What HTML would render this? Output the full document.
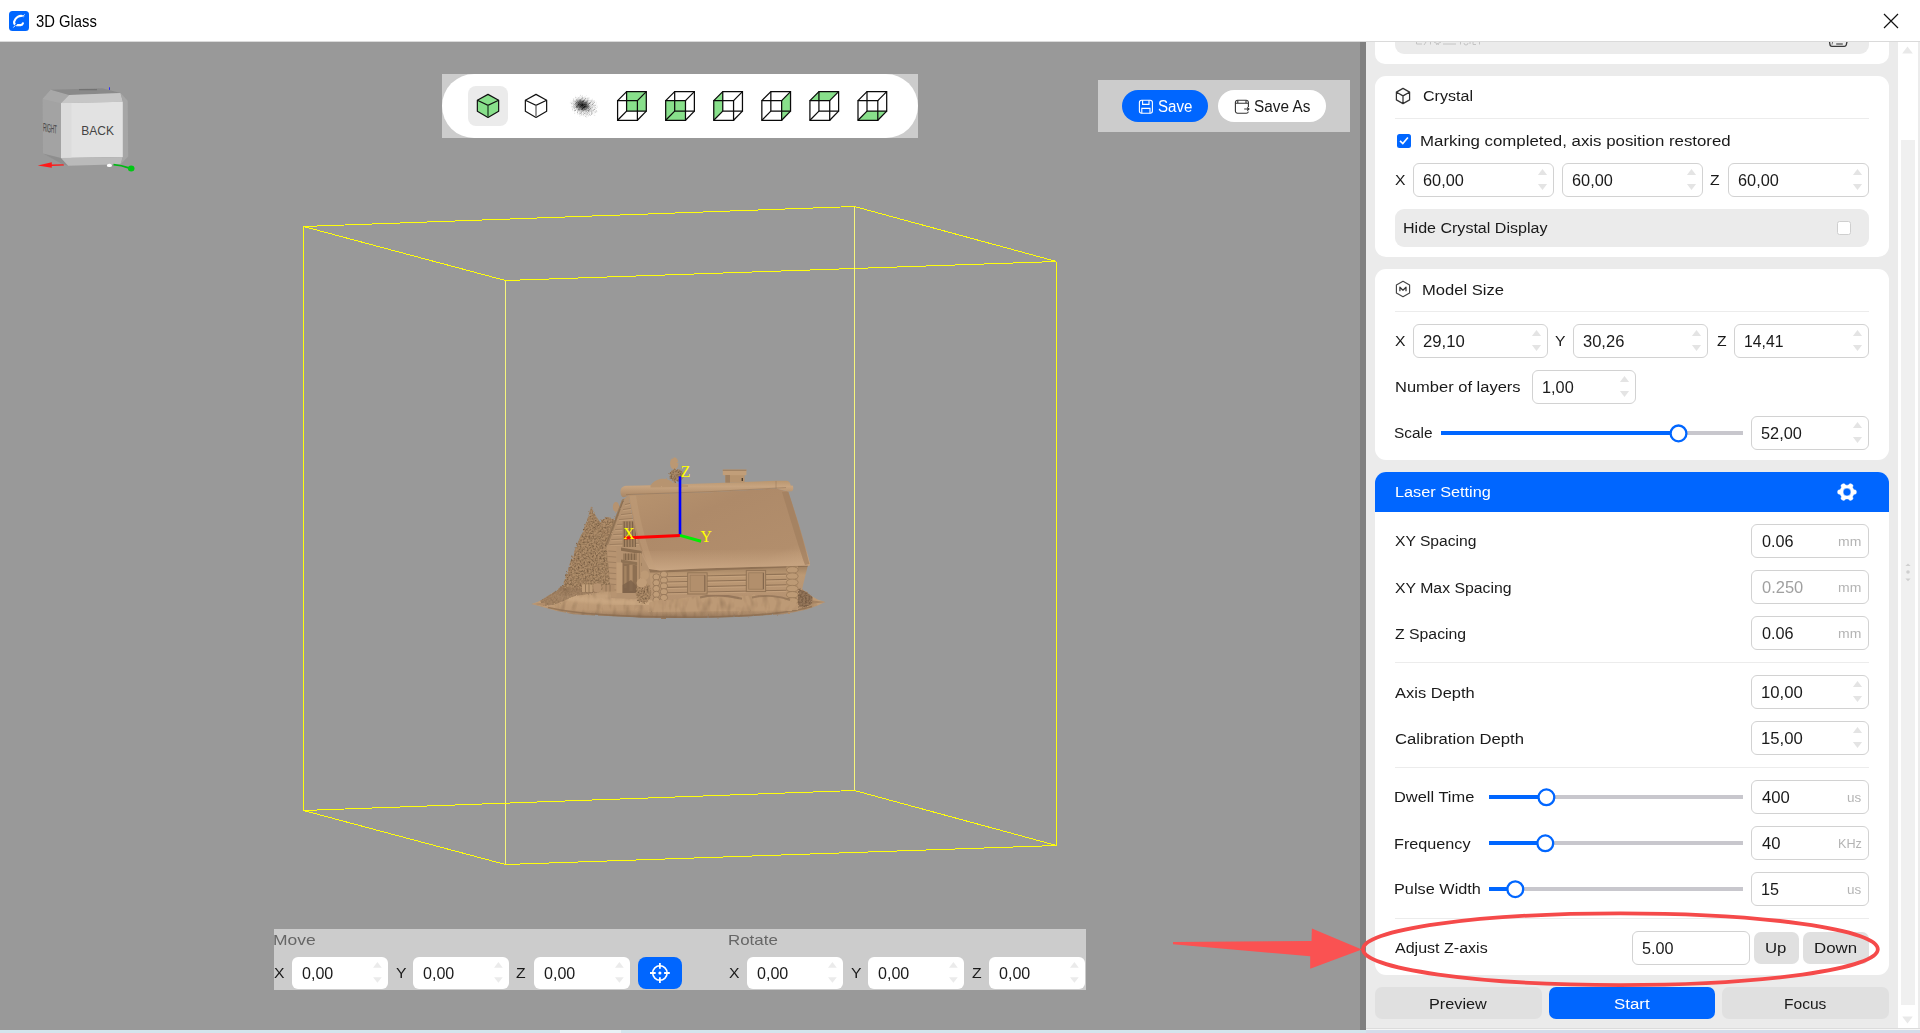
<!DOCTYPE html>
<html><head><meta charset="utf-8"><title>3D Glass</title>
<style>
html,body{margin:0;padding:0;}
body{width:1920px;height:1033px;overflow:hidden;position:relative;background:#999;font-family:"Liberation Sans",sans-serif;}
div{position:absolute;}
.abs{position:absolute;}
.t{white-space:nowrap;line-height:20px;height:20px;transform-origin:0 0;}
svg{overflow:visible;pointer-events:none;}
</style></head><body>

<div style="left:0px;top:42px;width:1360px;height:988px;background:#999;"></div>
<svg class="abs" style="left:0;top:0" width="1360" height="1033" viewBox="0 0 1360 1033">
<defs>
<linearGradient id="gBase" x1="0" y1="0" x2="0" y2="1"><stop offset="0" stop-color="#9a7b5b"/><stop offset="0.45" stop-color="#c4a17c"/><stop offset="0.8" stop-color="#bb9874"/><stop offset="1" stop-color="#94755a"/></linearGradient>
<linearGradient id="gRoof" x1="0" y1="0" x2="1" y2="1"><stop offset="0" stop-color="#b8946f"/><stop offset="0.35" stop-color="#ae8a69"/><stop offset="0.8" stop-color="#b28e6c"/><stop offset="1" stop-color="#c4a07c"/></linearGradient>
<linearGradient id="gEave" x1="0" y1="0" x2="0" y2="1"><stop offset="0" stop-color="#c9a683" stop-opacity="0"/><stop offset="1" stop-color="#caa784" stop-opacity="0.95"/></linearGradient>
<linearGradient id="gRidge" x1="0" y1="0" x2="0" y2="1"><stop offset="0" stop-color="#b9966f"/><stop offset="0.35" stop-color="#c7a480"/><stop offset="1" stop-color="#a98664"/></linearGradient>
<linearGradient id="gWall" x1="0" y1="0" x2="0" y2="1"><stop offset="0" stop-color="#9d7e5e"/><stop offset="0.25" stop-color="#bc9974"/><stop offset="1" stop-color="#b39070"/></linearGradient>
<filter id="fTree" x="-5%" y="-5%" width="110%" height="110%"><feTurbulence type="fractalNoise" baseFrequency="0.55" numOctaves="2" seed="4" result="n"/><feColorMatrix in="n" type="matrix" values="0 0 0 0 0  0 0 0 0 0  0 0 0 0 0  1.6 0 0 0 -0.55" result="a"/><feFlood flood-color="#5e4630"/><feComposite in2="a" operator="in" result="dk"/><feDisplacementMap in="SourceGraphic" in2="n" scale="3" xChannelSelector="R" yChannelSelector="G" result="sg"/><feComposite in="dk" in2="sg" operator="in" result="dk2"/><feMerge><feMergeNode in="sg"/><feMergeNode in="dk2"/></feMerge></filter>
<filter id="fRough" x="-5%" y="-5%" width="110%" height="110%"><feTurbulence type="fractalNoise" baseFrequency="0.35" numOctaves="2" seed="9" result="n"/><feDisplacementMap in="SourceGraphic" in2="n" scale="2.2" xChannelSelector="R" yChannelSelector="G"/></filter>
<filter id="fBase" x="-5%" y="-10%" width="110%" height="120%"><feTurbulence type="fractalNoise" baseFrequency="0.16 0.07" numOctaves="2" seed="2" result="n"/><feColorMatrix in="n" type="matrix" values="0 0 0 0 0  0 0 0 0 0  0 0 0 0 0  0.9 0 0 0 -0.42" result="a"/><feFlood flood-color="#6b5138"/><feComposite in2="a" operator="in" result="dk"/><feDisplacementMap in="SourceGraphic" in2="n" scale="2.5" xChannelSelector="R" yChannelSelector="G" result="sg"/><feComposite in="dk" in2="sg" operator="in" result="dk2"/><feMerge><feMergeNode in="sg"/><feMergeNode in="dk2"/></feMerge></filter>
<filter id="b1"><feGaussianBlur stdDeviation="0.6"/></filter>
<filter id="b2"><feGaussianBlur stdDeviation="1.2"/></filter>
</defs>
<g shape-rendering="crispEdges">
<line x1="303.5" y1="226.5" x2="854.5" y2="206.5" stroke="#ffff0a" stroke-width="1"/>
<line x1="303.5" y1="226.5" x2="505.5" y2="280.5" stroke="#ffff0a" stroke-width="1"/>
<line x1="505.5" y1="280.5" x2="1056.5" y2="261.5" stroke="#ffff0a" stroke-width="1"/>
<line x1="854.5" y1="206.5" x2="1056.5" y2="261.5" stroke="#ffff0a" stroke-width="1"/>
<line x1="303.5" y1="226.5" x2="303.5" y2="810.5" stroke="#ffff0a" stroke-width="1"/>
<line x1="505.5" y1="280.5" x2="505.5" y2="864.5" stroke="#f6f57c" stroke-width="1"/>
<line x1="854.5" y1="206.5" x2="854.5" y2="790.5" stroke="#f6f57c" stroke-width="1"/>
<line x1="1056.5" y1="261.5" x2="1056.5" y2="845.5" stroke="#ffff0a" stroke-width="1"/>
<line x1="303.5" y1="810.5" x2="854.5" y2="790.5" stroke="#ffff0a" stroke-width="1"/>
<line x1="303.5" y1="810.5" x2="505.5" y2="864.5" stroke="#ffff0a" stroke-width="1"/>
<line x1="505.5" y1="864.5" x2="1056.5" y2="845.5" stroke="#ffff0a" stroke-width="1"/>
<line x1="854.5" y1="790.5" x2="1056.5" y2="845.5" stroke="#ffff0a" stroke-width="1"/>
</g>
<g>
<polygon points="42.6,98.9 50.8,89.7 69.2,95 61,103.2 61,157.9 67.9,165.7 62,163.5 43,153.5" fill="#a3a3a3"/>
<polygon points="43,153.5 61,157.9 67.9,165.7 62,164" fill="#8e8e8e"/>
<polygon points="42.6,98.9 50.8,89.7 69.2,95 61,103.2" fill="#a8a8a8"/>
<polygon points="50.8,89.7 102.1,88.2 120.5,93.1 69.2,95" fill="#8a8a8a"/>
<polygon points="61,103.2 69.2,95 120.5,93.1 122.9,101.8" fill="#c6c6c6"/>
<polygon points="61,103.2 122.9,101.8 122.9,156.9 61,157.9" fill="#e2e2e2"/>
<polygon points="61,103.2 71.5,103 71.5,157.7 61,157.9" fill="#dcdcdc"/>
<polygon points="61,157.9 122.9,156.9 120.5,164.2 68.2,165.7" fill="#bababa"/>
<polygon points="122.9,101.8 120.5,93.1 127.7,100.8 128.2,156.5 120.5,164.2 122.9,156.9" fill="#a6a6a6"/>
<text x="97.7" y="134.6" font-family="Liberation Sans, sans-serif" font-size="12" fill="#444" text-anchor="middle">BACK</text>
<text transform="translate(43,131.2) skewY(10) scale(0.40,1)" font-family="Liberation Sans, sans-serif" font-size="12" fill="#444" letter-spacing="-0.6">RIGHT</text>
<rect x="109" y="87.3" width="1" height="2.6" fill="#2a2aff"/>
<rect x="79" y="89.2" width="18" height="1" fill="#555" opacity="0.55"/>
<polygon points="37.7,165.4 51.8,162.2 51.8,164.4 63.5,164.3 64,165.6 51.8,166 51.8,167.7" fill="#ff1a1a"/>
<path d="M113.5 164.6 C120 165 125 166.5 129.5 168.2" stroke="#00b814" stroke-width="1.8" fill="none"/>
<ellipse cx="131.2" cy="168.4" rx="3.3" ry="3" fill="#00c814"/>
<ellipse cx="109.4" cy="165.4" rx="2.6" ry="1.6" fill="#fff"/>
</g>
<g>
<polygon points="531.5,604 538,601.8 544,598.5 554,592 566,583 600,578 700,580 798,586 806,592 812.6,596.8 818,599.8 825.2,602.1 817,605.8 806.8,609.4 795,612 782.6,614.2 745,616.4 710,617.6 680,617.9 645,617.7 621.8,616.6 595,615.6 573.4,614.2 556,610.8 544.4,607.4" fill="url(#gBase)" filter="url(#fBase)"/>
<path d="M548 607.5 C580 615 640 617.5 700 617.2 C750 616.5 790 613 812 606.5" stroke="#8a6c50" stroke-width="1.6" fill="none" opacity="0.7" filter="url(#b1)"/>
<path d="M556 596 C600 604 700 607 800 600" stroke="#d0ae88" stroke-width="5" fill="none" opacity="0.55" filter="url(#b2)"/>
<polygon points="540,601 554,592 566,583 580,582 600,584 600,592 575,596 556,604 545,606" fill="#8f7155" opacity="0.55" filter="url(#fTree)"/>
<polygon points="531.5,604 545,602.6 545,605.4" fill="#b08c6a"/>
<polygon points="825.5,602 812,600.6 812,603.8" fill="#a58362"/>
<polygon points="591.7,506.5 593.5,512 596.5,517 600,522 604,528 608,536 612,548 616,565 618,590 563,588 564,581 566,575 568.5,568 571,560 573.5,553.5 576,547 578.5,541 581,535 583.5,529.5 586,523 588.5,516 590,510" fill="#ad8c69" filter="url(#fTree)"/>
<polygon points="601,520 606,517 612,518 616,522 615,535 612,548 606,546 602,530" fill="#ad8b68" filter="url(#fTree)"/>
<ellipse cx="607.5" cy="524.5" rx="6.5" ry="6.8" fill="#b08e6b" filter="url(#fTree)"/>
<ellipse cx="616" cy="507" rx="3.2" ry="5" fill="#b6936f" filter="url(#fRough)"/>
<polygon points="624.5,498.5 628.6,495 634,527 641,548 652,572 653,600 611,598 609,570 606.5,545 613,527 619,511" fill="#b49270"/>
<line x1="624.9" y1="504.6" x2="630.8" y2="503.2" stroke="#8c6f53" stroke-width="1.0" opacity="0.55"/>
<line x1="624.9" y1="505.8" x2="630.8" y2="504.4" stroke="#cfac87" stroke-width="1.0" opacity="0.45"/>
<line x1="622.9" y1="509.6" x2="631.9" y2="508.2" stroke="#8c6f53" stroke-width="1.0" opacity="0.55"/>
<line x1="622.9" y1="510.8" x2="631.9" y2="509.4" stroke="#cfac87" stroke-width="1.0" opacity="0.45"/>
<line x1="621.0" y1="514.6" x2="633.0" y2="513.2" stroke="#8c6f53" stroke-width="1.0" opacity="0.55"/>
<line x1="621.0" y1="515.8" x2="633.0" y2="514.4" stroke="#cfac87" stroke-width="1.0" opacity="0.45"/>
<line x1="619.0" y1="519.6" x2="634.1" y2="518.2" stroke="#8c6f53" stroke-width="1.0" opacity="0.55"/>
<line x1="619.0" y1="520.8" x2="634.1" y2="519.4" stroke="#cfac87" stroke-width="1.0" opacity="0.45"/>
<line x1="617.1" y1="524.6" x2="635.2" y2="523.2" stroke="#8c6f53" stroke-width="1.0" opacity="0.55"/>
<line x1="617.1" y1="525.8" x2="635.2" y2="524.4" stroke="#cfac87" stroke-width="1.0" opacity="0.45"/>
<line x1="615.1" y1="529.6" x2="636.3" y2="528.2" stroke="#8c6f53" stroke-width="1.0" opacity="0.55"/>
<line x1="615.1" y1="530.8" x2="636.3" y2="529.4" stroke="#cfac87" stroke-width="1.0" opacity="0.45"/>
<line x1="613.2" y1="534.6" x2="637.4" y2="533.2" stroke="#8c6f53" stroke-width="1.0" opacity="0.55"/>
<line x1="613.2" y1="535.8" x2="637.4" y2="534.4" stroke="#cfac87" stroke-width="1.0" opacity="0.45"/>
<line x1="611.2" y1="539.6" x2="638.5" y2="538.2" stroke="#8c6f53" stroke-width="1.0" opacity="0.55"/>
<line x1="611.2" y1="540.8" x2="638.5" y2="539.4" stroke="#cfac87" stroke-width="1.0" opacity="0.45"/>
<line x1="609.3" y1="544.6" x2="639.6" y2="543.2" stroke="#8c6f53" stroke-width="1.0" opacity="0.55"/>
<line x1="609.3" y1="545.8" x2="639.6" y2="544.4" stroke="#cfac87" stroke-width="1.0" opacity="0.45"/>
<polygon points="624.5,498.5 622,499.5 604.8,544.5 607.8,546" fill="#9a7c5d" filter="url(#fRough)"/>
<path d="M623 501 L606 545" stroke="#7d6248" stroke-width="0.8" opacity="0.7"/>
<rect x="622.5" y="521" width="13" height="26" fill="#a68563"/>
<line x1="624.2" y1="521.5" x2="624.4000000000001" y2="547" stroke="#6f5740" stroke-width="1.0" opacity="0.85"/>
<line x1="627.0" y1="521.5" x2="627.2" y2="547" stroke="#6f5740" stroke-width="1.0" opacity="0.85"/>
<line x1="629.8" y1="521.5" x2="630.0" y2="547" stroke="#6f5740" stroke-width="1.0" opacity="0.85"/>
<line x1="632.6" y1="521.5" x2="632.8000000000001" y2="547" stroke="#6f5740" stroke-width="1.0" opacity="0.85"/>
<line x1="635.2" y1="521.5" x2="635.4000000000001" y2="547" stroke="#6f5740" stroke-width="1.0" opacity="0.85"/>
<polygon points="621,547.5 642,551 642,554.2 621,550.8" fill="#8a6d50"/>
<rect x="623" y="553.5" width="14.5" height="6.5" fill="#9c7d5d"/>
<line x1="625.5" y1="553.5" x2="625.5" y2="560" stroke="#7a5f45" stroke-width="0.9" opacity="0.8"/>
<line x1="628.5" y1="553.5" x2="628.5" y2="560" stroke="#7a5f45" stroke-width="0.9" opacity="0.8"/>
<line x1="631.5" y1="553.5" x2="631.5" y2="560" stroke="#7a5f45" stroke-width="0.9" opacity="0.8"/>
<line x1="634.5" y1="553.5" x2="634.5" y2="560" stroke="#7a5f45" stroke-width="0.9" opacity="0.8"/>
<polygon points="621,559.5 642,563 642,566 621,562.8" fill="#8f7254"/>
<polygon points="622.5,563 637.5,565.5 637.5,593 622.5,593" fill="#8d6f52"/>
<rect x="629.4" y="565" width="3.2" height="26" fill="#b08d6a"/>
<rect x="624.2" y="566" width="2.4" height="22" fill="#a58462"/>
<polygon points="622.5,585 631,580 637.5,587 637.5,593 622.5,593" fill="#7e634a" opacity="0.85"/>
<rect x="616" y="562.5" width="6.2" height="30.5" fill="#c09d78"/>
<rect x="637.2" y="553" width="4.2" height="38" fill="#b6936f"/>
<line x1="639.3" y1="553" x2="639.3" y2="590" stroke="#8c6f53" stroke-width="0.8" opacity="0.7"/>
<polygon points="607,545 616.5,547 616.5,597 611.5,597 609,570" fill="#b79471"/>
<line x1="608.2" y1="551" x2="616.2" y2="551.6" stroke="#8c6f53" stroke-width="0.9" opacity="0.6"/>
<line x1="608.2" y1="556.5" x2="616.2" y2="557.1" stroke="#8c6f53" stroke-width="0.9" opacity="0.6"/>
<line x1="608.2" y1="562" x2="616.2" y2="562.6" stroke="#8c6f53" stroke-width="0.9" opacity="0.6"/>
<line x1="608.2" y1="567.5" x2="616.2" y2="568.1" stroke="#8c6f53" stroke-width="0.9" opacity="0.6"/>
<line x1="608.2" y1="573" x2="616.2" y2="573.6" stroke="#8c6f53" stroke-width="0.9" opacity="0.6"/>
<line x1="608.2" y1="578.5" x2="616.2" y2="579.1" stroke="#8c6f53" stroke-width="0.9" opacity="0.6"/>
<line x1="608.2" y1="584" x2="616.2" y2="584.6" stroke="#8c6f53" stroke-width="0.9" opacity="0.6"/>
<line x1="608.2" y1="589.5" x2="616.2" y2="590.1" stroke="#8c6f53" stroke-width="0.9" opacity="0.6"/>
<rect x="582" y="584.5" width="10.5" height="7.5" fill="#bf9d78"/><rect x="593.5" y="583.5" width="7.5" height="8.5" rx="2" fill="#b59270"/><rect x="602.5" y="585" width="12" height="6.5" fill="#b08d6b"/>
<path d="M585.5 584.5 V592 M589 584.5 V592 M606 585 V591.5 M610 585 V591.5" stroke="#8b6e52" stroke-width="0.8"/>
<ellipse cx="643.5" cy="593" rx="7.8" ry="10.5" fill="#ae8c69" filter="url(#fTree)"/><ellipse cx="644.8" cy="575.2" rx="4.2" ry="4.8" fill="#bd9a75" filter="url(#fRough)"/><ellipse cx="641.8" cy="583" rx="5.2" ry="4.6" fill="#c09d78" filter="url(#fRough)"/>
<polygon points="649,568.7 808,564.8 798,606 653,603" fill="url(#gWall)"/>
<line x1="667" y1="576.7" x2="787" y2="574.1" stroke="#80644a" stroke-width="1.1" opacity="0.7"/>
<line x1="667" y1="577.9" x2="787" y2="575.3" stroke="#d0ad88" stroke-width="1.0" opacity="0.5"/>
<line x1="667" y1="582.0" x2="787" y2="579.4" stroke="#80644a" stroke-width="1.1" opacity="0.7"/>
<line x1="667" y1="583.1999999999999" x2="787" y2="580.5999999999999" stroke="#d0ad88" stroke-width="1.0" opacity="0.5"/>
<line x1="667" y1="587.4000000000001" x2="787" y2="584.8000000000001" stroke="#80644a" stroke-width="1.1" opacity="0.7"/>
<line x1="667" y1="588.6" x2="787" y2="586.0" stroke="#d0ad88" stroke-width="1.0" opacity="0.5"/>
<line x1="667" y1="592.8000000000001" x2="787" y2="590.2" stroke="#80644a" stroke-width="1.1" opacity="0.7"/>
<line x1="667" y1="594.0" x2="787" y2="591.4" stroke="#d0ad88" stroke-width="1.0" opacity="0.5"/>
<polygon points="649,568.7 808,564.8 807.5,566.8 667,572.2 650,572.6" fill="#8a6c50" opacity="0.8"/>
<rect x="687.7" y="572.8" width="19.399999999999977" height="21.200000000000045" fill="#b79471" stroke="#927456" stroke-width="1"/>
<rect x="690.1" y="575.1999999999999" width="14.599999999999977" height="16.400000000000045" fill="#b28f6c" stroke="#9b7c5d" stroke-width="0.8"/>
<line x1="704.9" y1="575.1999999999999" x2="704.9" y2="591.6" stroke="#7b6047" stroke-width="0.9"/>
<rect x="746.3" y="570.4" width="19.300000000000068" height="21.200000000000045" fill="#b79471" stroke="#927456" stroke-width="1"/>
<rect x="748.6999999999999" y="572.8" width="14.500000000000068" height="16.400000000000045" fill="#b28f6c" stroke="#9b7c5d" stroke-width="0.8"/>
<line x1="763.4" y1="572.8" x2="763.4" y2="589.2" stroke="#7b6047" stroke-width="0.9"/>
<ellipse cx="656.3" cy="577.0" rx="3.400000000000034" ry="3.2" fill="#c09d78" stroke="#8e7053" stroke-width="0.7"/>
<ellipse cx="656.3" cy="582.8" rx="3.400000000000034" ry="3.2" fill="#c09d78" stroke="#8e7053" stroke-width="0.7"/>
<ellipse cx="656.3" cy="588.6" rx="3.400000000000034" ry="3.2" fill="#c09d78" stroke="#8e7053" stroke-width="0.7"/>
<ellipse cx="656.3" cy="594.4" rx="3.400000000000034" ry="3.2" fill="#c09d78" stroke="#8e7053" stroke-width="0.7"/>
<ellipse cx="656.3" cy="600.2" rx="3.400000000000034" ry="3.2" fill="#c09d78" stroke="#8e7053" stroke-width="0.7"/>
<ellipse cx="663.9000000000001" cy="574.4" rx="3.6999999999999886" ry="3.2" fill="#c09d78" stroke="#8e7053" stroke-width="0.7"/>
<ellipse cx="663.9000000000001" cy="580.1999999999999" rx="3.6999999999999886" ry="3.2" fill="#c09d78" stroke="#8e7053" stroke-width="0.7"/>
<ellipse cx="663.9000000000001" cy="586.0" rx="3.6999999999999886" ry="3.2" fill="#c09d78" stroke="#8e7053" stroke-width="0.7"/>
<ellipse cx="663.9000000000001" cy="591.8" rx="3.6999999999999886" ry="3.2" fill="#c09d78" stroke="#8e7053" stroke-width="0.7"/>
<ellipse cx="663.9000000000001" cy="597.6" rx="3.6999999999999886" ry="3.2" fill="#c09d78" stroke="#8e7053" stroke-width="0.7"/>
<rect x="786.5" y="566.5" width="11.5" height="40" fill="#b5926e"/>
<ellipse cx="792.3" cy="570.0" rx="5.9" ry="3.3" fill="#bd9a75" stroke="#8e7053" stroke-width="0.6"/>
<ellipse cx="792.3" cy="576.2" rx="5.9" ry="3.3" fill="#bd9a75" stroke="#8e7053" stroke-width="0.6"/>
<ellipse cx="792.3" cy="582.4" rx="5.9" ry="3.3" fill="#bd9a75" stroke="#8e7053" stroke-width="0.6"/>
<ellipse cx="792.3" cy="588.6" rx="5.9" ry="3.3" fill="#bd9a75" stroke="#8e7053" stroke-width="0.6"/>
<ellipse cx="792.3" cy="594.8" rx="5.9" ry="3.3" fill="#bd9a75" stroke="#8e7053" stroke-width="0.6"/>
<ellipse cx="792.3" cy="601.0" rx="5.9" ry="3.3" fill="#bd9a75" stroke="#8e7053" stroke-width="0.6"/>
<polygon points="798,588 806,592 812.6,597 812,604 806,607 798,606.5" fill="#94765a" filter="url(#fTree)"/>
<path d="M648 603 C660 598 668 601 680 598.5 C700 595 715 596.5 730 597.8 C750 593.5 770 596 786 598.5 L798 604 L798 610 L648 612 Z" fill="#bd9a76" filter="url(#fBase)"/>
<path d="M700 597.5 C712 593.8 728 595.5 742 598.8" stroke="#7c6148" stroke-width="2.2" fill="none" opacity="0.55" filter="url(#b1)"/>
<path d="M752 597.5 C765 594.5 780 596.5 790 600" stroke="#7c6148" stroke-width="2" fill="none" opacity="0.5" filter="url(#b1)"/>
<path d="M628.6 494.9 L640 494.2 L710 492.2 L776 488.6 L788.2 491.6 C792 503 796 515 799.8 527.4 C803.5 540 807 552 809.8 562.9 L809.6 565.4 L760 566.8 L700 568.6 L660 570.4 L649.2 569 C645 560 639 545 637 538 C635 531 631.5 512 628.6 494.9 Z" fill="url(#gRoof)"/>
<path d="M640 551 L806.5 548.5 L809.8 562.9 L809.6 565.4 L760 566.8 L700 568.6 L660 570.4 L649.2 569 Z" fill="url(#gEave)"/>
<path d="M629.5 496 C634 520 640 548 650 568 L656 569.5 C646 545 640 520 636 495.5 Z" fill="#c3a07b" opacity="0.45" filter="url(#b1)"/>
<path d="M782 492 C789 515 798 545 805 565 L809.5 564 C803 540 795 512 788.2 491.6 Z" fill="#a17f5f" opacity="0.7" filter="url(#b1)"/>
<path d="M622 487.6 C620 489 619.8 494.5 622.2 496.8 C624 498 627 496 629 494.9 L640 494.2 L710 492.2 L776 488.4 L788.2 491.6 L792 491.2 C793.6 490 793.6 486.6 792.6 485.6 L790.6 485.4 C790.6 483 789 480.8 786.8 480.7 L776 480.8 L710 483.2 L640 485.4 L626 485.8 C624 486 622.8 486.8 622 487.6 Z" fill="url(#gRidge)"/>
<path d="M776 481 L776 488.4" stroke="#9a7a5b" stroke-width="0.8" opacity="0.7"/>
<path d="M626 494.6 L710 491.6 L786 487.6" stroke="#8f7154" stroke-width="0.9" opacity="0.55" fill="none"/>
<rect x="725.4" y="474.6" width="19.2" height="8" fill="#b7946f"/><rect x="722.8" y="469.6" width="23.6" height="5.6" fill="#c19e79"/><rect x="725.4" y="475" width="4.6" height="7.6" fill="#9f8061"/><rect x="722.8" y="469.6" width="23.6" height="1.4" fill="#a28363"/><rect x="741.6" y="478" width="1.4" height="3" fill="#4a3a2a"/>
<path d="M650.5 485.4 C654 480.5 659 478.4 664 478.8 C668 479.2 671 481 674 482.4 C678 484 683 484.2 687 485 L687 487 L650.5 487.4 Z" fill="#b7946f" filter="url(#fRough)"/>
<ellipse cx="674.2" cy="463.4" rx="4.1" ry="6.2" fill="#bb9873" filter="url(#fRough)"/>
<ellipse cx="676.5" cy="475.4" rx="7.2" ry="6.4" fill="#a98866" filter="url(#fTree)"/>
</g>
<g>
<line x1="680" y1="535.5" x2="680" y2="476.4" stroke="#0000ff" stroke-width="2.6"/>
<line x1="624.2" y1="537.9" x2="680" y2="535.4" stroke="#ff0000" stroke-width="3.0"/>
<line x1="680" y1="535.4" x2="701" y2="541.2" stroke="#00ee00" stroke-width="3.0"/>
<g font-family="Liberation Serif, serif" font-size="15.8" fill="#ffff00"><text x="680.8" y="477.0">Z</text><text x="623.2" y="539.2">X</text><text x="700.4" y="542.0">Y</text></g>
</g>
</svg>
<div style="left:0px;top:0px;width:1920px;height:41px;background:#fff;"></div>
<div style="left:0px;top:41px;width:1920px;height:1px;background:#dadada;"></div>
<div style="left:9px;top:11px;width:20px;height:20px;background:#0066ff;border-radius:3.5px;"></div>
<svg class="abs" style="left:9px;top:11px" width="20" height="20" viewBox="0 0 20 20"><path d="M14.2 5.2 C10.5 3.8 6.2 6.5 5.2 10.6 C4.8 12.4 5.6 13.9 7.6 14.1 L11.6 14.1 C12.9 14.1 13.6 13.4 13.9 12.3" fill="none" stroke="#fff" stroke-width="2.2" stroke-linecap="round"/><path d="M15.6 3.6 L4.6 16.2" stroke="#0066ff" stroke-width="1.4"/><path d="M15.6 3.4 L13.4 6" stroke="#fff" stroke-width="0.9"/><path d="M6.3 14.4 L4.4 16.5" stroke="#fff" stroke-width="0.9"/></svg>
<div class="t" style="left:35.96px;top:12.48px;font-size:15.7px;color:#000;transform:scaleX(0.9429);">3D Glass</div>
<svg class="abs" style="left:0;top:0" width="1920" height="41"><path d="M1884 14 L1898 28 M1898 14 L1884 28" stroke="#111" stroke-width="1.2" fill="none"/></svg>
<div style="left:442px;top:74px;width:476px;height:64px;background:#ccc;"></div>
<div style="left:442px;top:74px;width:476px;height:64px;background:#fff;border-radius:32px;"></div>
<div style="left:468px;top:86px;width:40px;height:40px;background:#ebebeb;border-radius:8px;"></div>
<svg class="abs" style="left:0;top:0" width="1920" height="200">
<defs>
<radialGradient id="pcg" cx="0.45" cy="0.42" r="0.55"><stop offset="0" stop-color="#000" stop-opacity="0.95"/><stop offset="0.25" stop-color="#000" stop-opacity="0.75"/><stop offset="0.6" stop-color="#000" stop-opacity="0.35"/><stop offset="1" stop-color="#000" stop-opacity="0"/></radialGradient>
<pattern id="pcd" width="2.2" height="2.2" patternUnits="userSpaceOnUse" patternTransform="rotate(24)"><rect width="2.2" height="2.2" fill="#fff"/><circle cx="1.1" cy="1.1" r="0.95" fill="#000"/></pattern>
<mask id="pcm"><ellipse cx="583.6" cy="106" rx="15.5" ry="11" fill="url(#pcg)" transform="rotate(14 583.6 106)"/></mask>
<filter id="pcb" x="-50%" y="-50%" width="200%" height="200%"><feGaussianBlur stdDeviation="1.8"/></filter>
</defs>
<polygon points="488.00,94.40 498.65,100.20 498.65,111.25 488.00,117.40 477.35,111.25 477.35,100.20" fill="#88e08b" stroke="#111" stroke-width="1.2" stroke-linejoin="round"/>
<path d="M477.35 100.2 L488 105.4 L498.65 100.2" fill="none" stroke="#111" stroke-width="1.2"/>
<path d="M488 105.4 V117.2" fill="none" stroke="#2f5a33" stroke-width="1.5"/>
<polygon points="536.00,94.40 546.65,100.20 546.65,111.25 536.00,117.40 525.35,111.25 525.35,100.20" fill="#fff" stroke="#111" stroke-width="1.2" stroke-linejoin="round"/>
<path d="M525.35 100.2 L536 105.4 L546.65 100.2" fill="none" stroke="#111" stroke-width="1.2"/>
<path d="M536 105.4 V117.2" fill="none" stroke="#777" stroke-width="1.5"/>
<g transform="rotate(18 583.4 106)">
<ellipse cx="581.6" cy="105.4" rx="6.2" ry="4.0" fill="#000" opacity="0.62" filter="url(#pcb)"/>
<circle cx="569.85" cy="104.82" r="0.44" fill="#000" opacity="0.07"/>
<circle cx="569.86" cy="107.22" r="0.44" fill="#000" opacity="0.09"/>
<circle cx="571.43" cy="102.07" r="0.45" fill="#000" opacity="0.14"/>
<circle cx="571.22" cy="104.77" r="0.47" fill="#000" opacity="0.15"/>
<circle cx="570.42" cy="106.19" r="0.45" fill="#000" opacity="0.24"/>
<circle cx="571.44" cy="107.40" r="0.47" fill="#000" opacity="0.39"/>
<circle cx="572.75" cy="99.13" r="0.43" fill="#000" opacity="0.09"/>
<circle cx="572.92" cy="101.93" r="0.48" fill="#000" opacity="0.08"/>
<circle cx="572.16" cy="103.36" r="0.48" fill="#000" opacity="0.37"/>
<circle cx="572.99" cy="104.63" r="0.50" fill="#000" opacity="0.33"/>
<circle cx="572.35" cy="106.20" r="0.49" fill="#000" opacity="0.21"/>
<circle cx="573.01" cy="107.28" r="0.50" fill="#000" opacity="0.46"/>
<circle cx="572.07" cy="108.53" r="0.48" fill="#000" opacity="0.15"/>
<circle cx="572.89" cy="110.19" r="0.48" fill="#000" opacity="0.35"/>
<circle cx="572.33" cy="111.54" r="0.44" fill="#000" opacity="0.08"/>
<circle cx="574.64" cy="99.24" r="0.46" fill="#000" opacity="0.08"/>
<circle cx="573.66" cy="100.43" r="0.47" fill="#000" opacity="0.40"/>
<circle cx="574.59" cy="101.86" r="0.51" fill="#000" opacity="0.39"/>
<circle cx="573.63" cy="103.49" r="0.51" fill="#000" opacity="0.20"/>
<circle cx="574.33" cy="104.55" r="0.53" fill="#000" opacity="0.53"/>
<circle cx="573.52" cy="106.12" r="0.52" fill="#000" opacity="0.25"/>
<circle cx="574.50" cy="107.33" r="0.53" fill="#000" opacity="0.32"/>
<circle cx="573.79" cy="108.55" r="0.51" fill="#000" opacity="0.24"/>
<circle cx="574.33" cy="110.02" r="0.51" fill="#000" opacity="0.40"/>
<circle cx="573.61" cy="111.59" r="0.47" fill="#000" opacity="0.13"/>
<circle cx="574.40" cy="112.90" r="0.46" fill="#000" opacity="0.29"/>
<circle cx="576.17" cy="99.31" r="0.48" fill="#000" opacity="0.23"/>
<circle cx="575.45" cy="100.49" r="0.50" fill="#000" opacity="0.17"/>
<circle cx="576.14" cy="101.88" r="0.53" fill="#000" opacity="0.35"/>
<circle cx="575.08" cy="103.14" r="0.54" fill="#000" opacity="0.38"/>
<circle cx="575.93" cy="104.69" r="0.57" fill="#000" opacity="0.56"/>
<circle cx="575.23" cy="106.18" r="0.55" fill="#000" opacity="0.45"/>
<circle cx="576.06" cy="107.50" r="0.57" fill="#000" opacity="0.53"/>
<circle cx="575.11" cy="108.86" r="0.54" fill="#000" opacity="0.34"/>
<circle cx="575.93" cy="109.93" r="0.53" fill="#000" opacity="0.55"/>
<circle cx="575.43" cy="111.28" r="0.50" fill="#000" opacity="0.40"/>
<circle cx="576.18" cy="112.79" r="0.48" fill="#000" opacity="0.43"/>
<circle cx="575.09" cy="113.92" r="0.44" fill="#000" opacity="0.08"/>
<circle cx="577.48" cy="96.63" r="0.43" fill="#000" opacity="0.24"/>
<circle cx="576.93" cy="97.94" r="0.46" fill="#000" opacity="0.10"/>
<circle cx="577.45" cy="99.34" r="0.50" fill="#000" opacity="0.25"/>
<circle cx="576.69" cy="100.62" r="0.52" fill="#000" opacity="0.24"/>
<circle cx="577.63" cy="101.86" r="0.56" fill="#000" opacity="0.64"/>
<circle cx="576.68" cy="103.11" r="0.57" fill="#000" opacity="0.69"/>
<circle cx="577.56" cy="104.47" r="0.60" fill="#000" opacity="0.54"/>
<circle cx="576.75" cy="106.03" r="0.59" fill="#000" opacity="0.48"/>
<circle cx="577.52" cy="107.51" r="0.60" fill="#000" opacity="0.49"/>
<circle cx="576.86" cy="108.78" r="0.57" fill="#000" opacity="0.71"/>
<circle cx="577.44" cy="109.86" r="0.56" fill="#000" opacity="0.54"/>
<circle cx="576.96" cy="111.48" r="0.52" fill="#000" opacity="0.22"/>
<circle cx="577.39" cy="112.80" r="0.50" fill="#000" opacity="0.49"/>
<circle cx="576.89" cy="114.03" r="0.46" fill="#000" opacity="0.18"/>
<circle cx="577.41" cy="115.47" r="0.43" fill="#000" opacity="0.26"/>
<circle cx="579.29" cy="96.64" r="0.44" fill="#000" opacity="0.21"/>
<circle cx="578.47" cy="98.07" r="0.47" fill="#000" opacity="0.31"/>
<circle cx="579.20" cy="99.41" r="0.51" fill="#000" opacity="0.33"/>
<circle cx="578.32" cy="100.72" r="0.54" fill="#000" opacity="0.59"/>
<circle cx="579.16" cy="102.00" r="0.58" fill="#000" opacity="0.71"/>
<circle cx="578.38" cy="103.34" r="0.60" fill="#000" opacity="0.58"/>
<circle cx="579.19" cy="104.85" r="0.63" fill="#000" opacity="0.56"/>
<circle cx="578.44" cy="105.96" r="0.62" fill="#000" opacity="0.82"/>
<circle cx="579.16" cy="107.33" r="0.63" fill="#000" opacity="0.80"/>
<circle cx="578.18" cy="108.80" r="0.60" fill="#000" opacity="0.74"/>
<circle cx="579.17" cy="110.04" r="0.58" fill="#000" opacity="0.41"/>
<circle cx="578.43" cy="111.40" r="0.54" fill="#000" opacity="0.36"/>
<circle cx="579.30" cy="112.65" r="0.51" fill="#000" opacity="0.42"/>
<circle cx="578.27" cy="114.17" r="0.47" fill="#000" opacity="0.06"/>
<circle cx="579.96" cy="97.88" r="0.49" fill="#000" opacity="0.43"/>
<circle cx="580.61" cy="99.32" r="0.53" fill="#000" opacity="0.55"/>
<circle cx="579.87" cy="100.72" r="0.56" fill="#000" opacity="0.40"/>
<circle cx="580.83" cy="101.90" r="0.60" fill="#000" opacity="0.77"/>
<circle cx="579.83" cy="103.15" r="0.62" fill="#000" opacity="0.72"/>
<circle cx="580.81" cy="104.79" r="0.66" fill="#000" opacity="0.79"/>
<circle cx="580.08" cy="105.91" r="0.65" fill="#000" opacity="0.85"/>
<circle cx="580.66" cy="107.26" r="0.66" fill="#000" opacity="0.67"/>
<circle cx="579.87" cy="108.75" r="0.62" fill="#000" opacity="0.58"/>
<circle cx="580.61" cy="110.19" r="0.60" fill="#000" opacity="0.62"/>
<circle cx="579.88" cy="111.23" r="0.56" fill="#000" opacity="0.68"/>
<circle cx="580.83" cy="112.57" r="0.53" fill="#000" opacity="0.24"/>
<circle cx="579.93" cy="114.02" r="0.49" fill="#000" opacity="0.36"/>
<circle cx="580.49" cy="115.30" r="0.45" fill="#000" opacity="0.27"/>
<circle cx="582.04" cy="96.68" r="0.46" fill="#000" opacity="0.16"/>
<circle cx="581.31" cy="97.72" r="0.49" fill="#000" opacity="0.21"/>
<circle cx="582.21" cy="99.30" r="0.53" fill="#000" opacity="0.48"/>
<circle cx="581.57" cy="100.78" r="0.57" fill="#000" opacity="0.59"/>
<circle cx="582.11" cy="101.94" r="0.61" fill="#000" opacity="0.72"/>
<circle cx="581.25" cy="103.29" r="0.64" fill="#000" opacity="0.62"/>
<circle cx="582.10" cy="104.56" r="0.68" fill="#000" opacity="0.92"/>
<circle cx="581.53" cy="106.01" r="0.69" fill="#000" opacity="0.81"/>
<circle cx="582.33" cy="107.31" r="0.68" fill="#000" opacity="0.89"/>
<circle cx="581.61" cy="108.53" r="0.64" fill="#000" opacity="0.84"/>
<circle cx="582.32" cy="109.90" r="0.61" fill="#000" opacity="0.80"/>
<circle cx="581.50" cy="111.56" r="0.57" fill="#000" opacity="0.52"/>
<circle cx="582.26" cy="112.90" r="0.53" fill="#000" opacity="0.39"/>
<circle cx="581.63" cy="114.09" r="0.49" fill="#000" opacity="0.41"/>
<circle cx="582.11" cy="115.54" r="0.46" fill="#000" opacity="0.23"/>
<circle cx="583.06" cy="95.29" r="0.42" fill="#000" opacity="0.11"/>
<circle cx="583.94" cy="96.74" r="0.46" fill="#000" opacity="0.08"/>
<circle cx="583.01" cy="98.02" r="0.49" fill="#000" opacity="0.49"/>
<circle cx="583.94" cy="99.39" r="0.53" fill="#000" opacity="0.37"/>
<circle cx="582.83" cy="100.58" r="0.57" fill="#000" opacity="0.49"/>
<circle cx="583.89" cy="101.94" r="0.61" fill="#000" opacity="0.67"/>
<circle cx="583.12" cy="103.13" r="0.65" fill="#000" opacity="0.58"/>
<circle cx="583.65" cy="104.58" r="0.68" fill="#000" opacity="0.95"/>
<circle cx="582.86" cy="105.86" r="0.72" fill="#000" opacity="1.00"/>
<circle cx="583.87" cy="107.49" r="0.68" fill="#000" opacity="0.85"/>
<circle cx="583.18" cy="108.70" r="0.65" fill="#000" opacity="0.82"/>
<circle cx="583.61" cy="109.94" r="0.61" fill="#000" opacity="0.81"/>
<circle cx="582.92" cy="111.49" r="0.57" fill="#000" opacity="0.56"/>
<circle cx="583.79" cy="112.89" r="0.53" fill="#000" opacity="0.48"/>
<circle cx="582.92" cy="114.05" r="0.49" fill="#000" opacity="0.33"/>
<circle cx="583.94" cy="115.33" r="0.46" fill="#000" opacity="0.30"/>
<circle cx="583.19" cy="116.81" r="0.42" fill="#000" opacity="0.13"/>
<circle cx="585.21" cy="96.56" r="0.45" fill="#000" opacity="0.19"/>
<circle cx="584.59" cy="97.71" r="0.49" fill="#000" opacity="0.31"/>
<circle cx="585.34" cy="99.21" r="0.53" fill="#000" opacity="0.59"/>
<circle cx="584.58" cy="100.60" r="0.57" fill="#000" opacity="0.65"/>
<circle cx="585.16" cy="101.97" r="0.60" fill="#000" opacity="0.70"/>
<circle cx="584.73" cy="103.47" r="0.64" fill="#000" opacity="0.71"/>
<circle cx="585.32" cy="104.50" r="0.66" fill="#000" opacity="0.72"/>
<circle cx="584.68" cy="106.16" r="0.69" fill="#000" opacity="0.85"/>
<circle cx="585.26" cy="107.23" r="0.66" fill="#000" opacity="0.80"/>
<circle cx="584.72" cy="108.55" r="0.64" fill="#000" opacity="0.78"/>
<circle cx="585.14" cy="109.93" r="0.60" fill="#000" opacity="0.73"/>
<circle cx="584.62" cy="111.33" r="0.57" fill="#000" opacity="0.44"/>
<circle cx="585.38" cy="112.59" r="0.53" fill="#000" opacity="0.37"/>
<circle cx="584.40" cy="114.10" r="0.49" fill="#000" opacity="0.39"/>
<circle cx="585.21" cy="115.46" r="0.45" fill="#000" opacity="0.08"/>
<circle cx="586.83" cy="96.52" r="0.45" fill="#000" opacity="0.12"/>
<circle cx="585.96" cy="97.78" r="0.49" fill="#000" opacity="0.30"/>
<circle cx="586.94" cy="99.26" r="0.52" fill="#000" opacity="0.44"/>
<circle cx="586.14" cy="100.74" r="0.56" fill="#000" opacity="0.64"/>
<circle cx="586.98" cy="102.07" r="0.59" fill="#000" opacity="0.50"/>
<circle cx="586.03" cy="103.23" r="0.63" fill="#000" opacity="0.85"/>
<circle cx="586.77" cy="104.85" r="0.64" fill="#000" opacity="0.89"/>
<circle cx="585.95" cy="105.90" r="0.66" fill="#000" opacity="0.94"/>
<circle cx="586.78" cy="107.19" r="0.64" fill="#000" opacity="0.82"/>
<circle cx="586.07" cy="108.82" r="0.63" fill="#000" opacity="0.82"/>
<circle cx="586.84" cy="110.12" r="0.59" fill="#000" opacity="0.46"/>
<circle cx="585.98" cy="111.47" r="0.56" fill="#000" opacity="0.34"/>
<circle cx="587.07" cy="112.60" r="0.52" fill="#000" opacity="0.54"/>
<circle cx="586.20" cy="114.10" r="0.49" fill="#000" opacity="0.29"/>
<circle cx="586.76" cy="115.28" r="0.45" fill="#000" opacity="0.21"/>
<circle cx="587.67" cy="97.91" r="0.48" fill="#000" opacity="0.09"/>
<circle cx="588.29" cy="99.12" r="0.51" fill="#000" opacity="0.38"/>
<circle cx="587.79" cy="100.80" r="0.55" fill="#000" opacity="0.37"/>
<circle cx="588.27" cy="101.77" r="0.57" fill="#000" opacity="0.70"/>
<circle cx="587.63" cy="103.41" r="0.61" fill="#000" opacity="0.81"/>
<circle cx="588.42" cy="104.66" r="0.61" fill="#000" opacity="0.61"/>
<circle cx="587.69" cy="105.81" r="0.64" fill="#000" opacity="0.70"/>
<circle cx="588.57" cy="107.22" r="0.61" fill="#000" opacity="0.74"/>
<circle cx="587.75" cy="108.66" r="0.61" fill="#000" opacity="0.63"/>
<circle cx="588.30" cy="110.06" r="0.57" fill="#000" opacity="0.44"/>
<circle cx="587.81" cy="111.52" r="0.55" fill="#000" opacity="0.31"/>
<circle cx="588.57" cy="112.80" r="0.51" fill="#000" opacity="0.43"/>
<circle cx="587.69" cy="114.10" r="0.48" fill="#000" opacity="0.23"/>
<circle cx="588.55" cy="115.35" r="0.44" fill="#000" opacity="0.28"/>
<circle cx="590.08" cy="96.66" r="0.43" fill="#000" opacity="0.20"/>
<circle cx="589.16" cy="98.06" r="0.47" fill="#000" opacity="0.33"/>
<circle cx="590.06" cy="99.36" r="0.49" fill="#000" opacity="0.45"/>
<circle cx="589.16" cy="100.69" r="0.53" fill="#000" opacity="0.53"/>
<circle cx="589.92" cy="101.94" r="0.55" fill="#000" opacity="0.33"/>
<circle cx="589.14" cy="103.36" r="0.58" fill="#000" opacity="0.41"/>
<circle cx="589.87" cy="104.83" r="0.59" fill="#000" opacity="0.64"/>
<circle cx="589.14" cy="106.06" r="0.61" fill="#000" opacity="0.71"/>
<circle cx="589.99" cy="107.31" r="0.59" fill="#000" opacity="0.62"/>
<circle cx="589.26" cy="108.78" r="0.58" fill="#000" opacity="0.77"/>
<circle cx="590.17" cy="109.86" r="0.55" fill="#000" opacity="0.58"/>
<circle cx="589.30" cy="111.30" r="0.53" fill="#000" opacity="0.47"/>
<circle cx="589.80" cy="112.63" r="0.49" fill="#000" opacity="0.27"/>
<circle cx="589.04" cy="114.00" r="0.47" fill="#000" opacity="0.18"/>
<circle cx="590.00" cy="115.45" r="0.43" fill="#000" opacity="0.20"/>
<circle cx="590.78" cy="98.10" r="0.45" fill="#000" opacity="0.34"/>
<circle cx="591.65" cy="99.08" r="0.48" fill="#000" opacity="0.30"/>
<circle cx="590.85" cy="100.42" r="0.51" fill="#000" opacity="0.41"/>
<circle cx="591.39" cy="101.94" r="0.53" fill="#000" opacity="0.58"/>
<circle cx="590.75" cy="103.34" r="0.56" fill="#000" opacity="0.40"/>
<circle cx="591.71" cy="104.62" r="0.56" fill="#000" opacity="0.36"/>
<circle cx="590.79" cy="105.95" r="0.58" fill="#000" opacity="0.58"/>
<circle cx="591.59" cy="107.37" r="0.56" fill="#000" opacity="0.44"/>
<circle cx="590.84" cy="108.62" r="0.56" fill="#000" opacity="0.44"/>
<circle cx="591.43" cy="109.87" r="0.53" fill="#000" opacity="0.25"/>
<circle cx="590.85" cy="111.36" r="0.51" fill="#000" opacity="0.25"/>
<circle cx="591.63" cy="112.57" r="0.48" fill="#000" opacity="0.39"/>
<circle cx="590.93" cy="113.93" r="0.45" fill="#000" opacity="0.34"/>
<circle cx="592.27" cy="97.89" r="0.44" fill="#000" opacity="0.25"/>
<circle cx="592.98" cy="99.26" r="0.46" fill="#000" opacity="0.35"/>
<circle cx="592.39" cy="100.59" r="0.49" fill="#000" opacity="0.47"/>
<circle cx="593.21" cy="101.99" r="0.50" fill="#000" opacity="0.52"/>
<circle cx="592.35" cy="103.28" r="0.54" fill="#000" opacity="0.30"/>
<circle cx="592.90" cy="104.66" r="0.53" fill="#000" opacity="0.33"/>
<circle cx="592.28" cy="106.07" r="0.55" fill="#000" opacity="0.35"/>
<circle cx="592.98" cy="107.38" r="0.53" fill="#000" opacity="0.42"/>
<circle cx="592.41" cy="108.71" r="0.54" fill="#000" opacity="0.41"/>
<circle cx="593.26" cy="110.14" r="0.50" fill="#000" opacity="0.53"/>
<circle cx="592.15" cy="111.56" r="0.49" fill="#000" opacity="0.22"/>
<circle cx="593.13" cy="112.69" r="0.46" fill="#000" opacity="0.28"/>
<circle cx="593.88" cy="97.94" r="0.42" fill="#000" opacity="0.07"/>
<circle cx="594.73" cy="99.13" r="0.44" fill="#000" opacity="0.15"/>
<circle cx="594.04" cy="100.77" r="0.47" fill="#000" opacity="0.14"/>
<circle cx="594.45" cy="101.77" r="0.48" fill="#000" opacity="0.40"/>
<circle cx="593.82" cy="103.35" r="0.51" fill="#000" opacity="0.28"/>
<circle cx="594.65" cy="104.48" r="0.51" fill="#000" opacity="0.20"/>
<circle cx="593.92" cy="106.02" r="0.52" fill="#000" opacity="0.25"/>
<circle cx="594.58" cy="107.34" r="0.51" fill="#000" opacity="0.39"/>
<circle cx="593.79" cy="108.80" r="0.51" fill="#000" opacity="0.26"/>
<circle cx="594.46" cy="109.90" r="0.48" fill="#000" opacity="0.39"/>
<circle cx="593.90" cy="111.51" r="0.47" fill="#000" opacity="0.35"/>
<circle cx="595.52" cy="100.55" r="0.45" fill="#000" opacity="0.06"/>
<circle cx="596.38" cy="101.88" r="0.46" fill="#000" opacity="0.23"/>
<circle cx="595.50" cy="103.47" r="0.48" fill="#000" opacity="0.29"/>
<circle cx="596.13" cy="104.49" r="0.48" fill="#000" opacity="0.23"/>
<circle cx="595.23" cy="105.83" r="0.49" fill="#000" opacity="0.45"/>
<circle cx="596.17" cy="107.42" r="0.48" fill="#000" opacity="0.28"/>
<circle cx="595.51" cy="108.53" r="0.48" fill="#000" opacity="0.20"/>
<circle cx="596.24" cy="109.88" r="0.46" fill="#000" opacity="0.07"/>
<circle cx="595.49" cy="111.48" r="0.45" fill="#000" opacity="0.08"/>
<circle cx="597.04" cy="103.25" r="0.46" fill="#000" opacity="0.12"/>
<circle cx="596.98" cy="106.17" r="0.47" fill="#000" opacity="0.29"/>
<circle cx="597.90" cy="107.33" r="0.45" fill="#000" opacity="0.31"/>
<circle cx="596.87" cy="108.63" r="0.46" fill="#000" opacity="0.28"/>
<circle cx="597.11" cy="111.30" r="0.43" fill="#000" opacity="0.19"/>
</g>
<polygon points="626.60,91.60 646.30,91.60 646.30,111.10 626.60,111.10" fill="#88e08b"/>
<g fill="none" stroke="#0a0a0a" stroke-width="1.25" stroke-linejoin="miter"><polygon points="626.60,91.60 646.30,91.60 646.30,111.10 626.60,111.10"/><polygon points="617.60,100.60 637.40,100.60 637.40,120.30 617.60,120.30"/>
<path d="M617.60 100.60 L626.60 91.60"/>
<path d="M637.40 100.60 L646.30 91.60"/>
<path d="M637.40 120.30 L646.30 111.10"/>
<path d="M617.60 120.30 L626.60 111.10"/>
</g>
<polygon points="665.68,100.60 685.48,100.60 685.48,120.30 665.68,120.30" fill="#88e08b"/>
<g fill="none" stroke="#0a0a0a" stroke-width="1.25" stroke-linejoin="miter"><polygon points="674.68,91.60 694.38,91.60 694.38,111.10 674.68,111.10"/><polygon points="665.68,100.60 685.48,100.60 685.48,120.30 665.68,120.30"/>
<path d="M665.68 100.60 L674.68 91.60"/>
<path d="M685.48 100.60 L694.38 91.60"/>
<path d="M685.48 120.30 L694.38 111.10"/>
<path d="M665.68 120.30 L674.68 111.10"/>
</g>
<polygon points="713.76,100.60 722.76,91.60 722.76,111.10 713.76,120.30" fill="#88e08b"/>
<g fill="none" stroke="#0a0a0a" stroke-width="1.25" stroke-linejoin="miter"><polygon points="722.76,91.60 742.46,91.60 742.46,111.10 722.76,111.10"/><polygon points="713.76,100.60 733.56,100.60 733.56,120.30 713.76,120.30"/>
<path d="M713.76 100.60 L722.76 91.60"/>
<path d="M733.56 100.60 L742.46 91.60"/>
<path d="M733.56 120.30 L742.46 111.10"/>
<path d="M713.76 120.30 L722.76 111.10"/>
</g>
<polygon points="781.64,100.60 790.54,91.60 790.54,111.10 781.64,120.30" fill="#88e08b"/>
<g fill="none" stroke="#0a0a0a" stroke-width="1.25" stroke-linejoin="miter"><polygon points="770.84,91.60 790.54,91.60 790.54,111.10 770.84,111.10"/><polygon points="761.84,100.60 781.64,100.60 781.64,120.30 761.84,120.30"/>
<path d="M761.84 100.60 L770.84 91.60"/>
<path d="M781.64 100.60 L790.54 91.60"/>
<path d="M781.64 120.30 L790.54 111.10"/>
<path d="M761.84 120.30 L770.84 111.10"/>
</g>
<polygon points="809.92,100.60 818.92,91.60 838.62,91.60 829.72,100.60" fill="#88e08b"/>
<g fill="none" stroke="#0a0a0a" stroke-width="1.25" stroke-linejoin="miter"><polygon points="818.92,91.60 838.62,91.60 838.62,111.10 818.92,111.10"/><polygon points="809.92,100.60 829.72,100.60 829.72,120.30 809.92,120.30"/>
<path d="M809.92 100.60 L818.92 91.60"/>
<path d="M829.72 100.60 L838.62 91.60"/>
<path d="M829.72 120.30 L838.62 111.10"/>
<path d="M809.92 120.30 L818.92 111.10"/>
</g>
<polygon points="858.00,120.30 867.00,111.10 886.70,111.10 877.80,120.30" fill="#88e08b"/>
<g fill="none" stroke="#0a0a0a" stroke-width="1.25" stroke-linejoin="miter"><polygon points="867.00,91.60 886.70,91.60 886.70,111.10 867.00,111.10"/><polygon points="858.00,100.60 877.80,100.60 877.80,120.30 858.00,120.30"/>
<path d="M858.00 100.60 L867.00 91.60"/>
<path d="M877.80 100.60 L886.70 91.60"/>
<path d="M877.80 120.30 L886.70 111.10"/>
<path d="M858.00 120.30 L867.00 111.10"/>
</g>
</svg>
<div style="left:1098px;top:80px;width:252px;height:52px;background:#ccc;"></div>
<div style="left:1122px;top:90px;width:86px;height:32px;background:#0066ff;border-radius:16px;"></div>
<div style="left:1218px;top:90px;width:108px;height:32px;background:#fff;border-radius:16px;"></div>
<svg class="abs" style="left:1138px;top:99px" width="16" height="16" viewBox="0 0 16 16"><rect x="1.4" y="1.2" width="13" height="13" rx="2.2" fill="none" stroke="#fff" stroke-width="1.1"/><path d="M4.6 1.2 V5.4 H11 V1.2 M3.8 14.2 V9.4 H12 V14.2" fill="none" stroke="#fff" stroke-width="1.1"/></svg>
<div class="t" style="left:1157.63px;top:96.58px;font-size:15.6px;color:#fff;transform:scaleX(0.9676);">Save</div>
<svg class="abs" style="left:1234px;top:99px" width="16" height="16" viewBox="0 0 16 16"><path d="M14.4 8 V3.4 A2.2 2.2 0 0 0 12.2 1.2 H3.6 A2.2 2.2 0 0 0 1.4 3.4 V12 A2.2 2.2 0 0 0 3.6 14.2 H12.2 A2.2 2.2 0 0 0 14.4 12.6" fill="none" stroke="#333" stroke-width="1.1"/><path d="M1.4 4.3 H14.4 M3.8 1.4 V4.1 M12 1.4 V4.1" fill="none" stroke="#333" stroke-width="1.1"/><path d="M10.2 10 H14.8 M13.2 8.4 L15 10 L13.2 11.6" fill="none" stroke="#333" stroke-width="1.1"/></svg>
<div class="t" style="left:1253.62px;top:96.58px;font-size:15.6px;color:#1a1a1a;transform:scaleX(0.9842);">Save As</div>
<div style="left:274px;top:929px;width:812px;height:61px;background:#ccc;"></div>
<div class="t" style="left:273.35px;top:929.87px;font-size:14.5px;color:#666;transform:scaleX(1.2043);">Move</div>
<div class="t" style="left:728.29px;top:929.87px;font-size:14.5px;color:#666;transform:scaleX(1.1654);">Rotate</div>
<div class="t" style="left:273.84px;top:963.18px;font-size:15.5px;color:#1a1a1a;transform:scaleX(1.0150);">X</div>
<div style="left:292px;top:957px;width:96px;height:32px;background:#fff;border-radius:6px;"></div>
<div class="t" style="left:301.89px;top:964.18px;font-size:15.6px;color:#1a1a1a;transform:scaleX(1.0319);">0,00</div>
<svg class="abs" style="left:0;top:0" width="1920" height="1033"><polygon points="377.4,961.9 381.8,967.8 373.1,967.8" fill="#ebebeb"/><polygon points="373.1,977.2 381.8,977.2 377.4,982.8" fill="#ebebeb"/></svg>
<div class="t" style="left:395.67px;top:963.18px;font-size:15.5px;color:#1a1a1a;transform:scaleX(1.0150);">Y</div>
<div style="left:413px;top:957px;width:96px;height:32px;background:#fff;border-radius:6px;"></div>
<div class="t" style="left:422.89px;top:964.18px;font-size:15.6px;color:#1a1a1a;transform:scaleX(1.0319);">0,00</div>
<svg class="abs" style="left:0;top:0" width="1920" height="1033"><polygon points="498.4,961.9 502.8,967.8 494.1,967.8" fill="#ebebeb"/><polygon points="494.1,977.2 502.8,977.2 498.4,982.8" fill="#ebebeb"/></svg>
<div class="t" style="left:516.19px;top:963.18px;font-size:15.5px;color:#1a1a1a;transform:scaleX(1.0150);">Z</div>
<div style="left:534px;top:957px;width:96px;height:32px;background:#fff;border-radius:6px;"></div>
<div class="t" style="left:543.89px;top:964.18px;font-size:15.6px;color:#1a1a1a;transform:scaleX(1.0319);">0,00</div>
<svg class="abs" style="left:0;top:0" width="1920" height="1033"><polygon points="619.4,961.9 623.8,967.8 615.0,967.8" fill="#ebebeb"/><polygon points="615.0,977.2 623.8,977.2 619.4,982.8" fill="#ebebeb"/></svg>
<div class="t" style="left:728.74px;top:963.18px;font-size:15.5px;color:#1a1a1a;transform:scaleX(1.0150);">X</div>
<div style="left:747px;top:957px;width:96px;height:32px;background:#fff;border-radius:6px;"></div>
<div class="t" style="left:756.89px;top:964.18px;font-size:15.6px;color:#1a1a1a;transform:scaleX(1.0319);">0,00</div>
<svg class="abs" style="left:0;top:0" width="1920" height="1033"><polygon points="832.4,961.9 836.8,967.8 828.0,967.8" fill="#ebebeb"/><polygon points="828.0,977.2 836.8,977.2 832.4,982.8" fill="#ebebeb"/></svg>
<div class="t" style="left:850.67px;top:963.18px;font-size:15.5px;color:#1a1a1a;transform:scaleX(1.0150);">Y</div>
<div style="left:868px;top:957px;width:96px;height:32px;background:#fff;border-radius:6px;"></div>
<div class="t" style="left:877.89px;top:964.18px;font-size:15.6px;color:#1a1a1a;transform:scaleX(1.0319);">0,00</div>
<svg class="abs" style="left:0;top:0" width="1920" height="1033"><polygon points="953.4,961.9 957.8,967.8 949.0,967.8" fill="#ebebeb"/><polygon points="949.0,977.2 957.8,977.2 953.4,982.8" fill="#ebebeb"/></svg>
<div class="t" style="left:971.59px;top:963.18px;font-size:15.5px;color:#1a1a1a;transform:scaleX(1.0150);">Z</div>
<div style="left:989px;top:957px;width:96px;height:32px;background:#fff;border-radius:6px;"></div>
<div class="t" style="left:998.89px;top:964.18px;font-size:15.6px;color:#1a1a1a;transform:scaleX(1.0319);">0,00</div>
<svg class="abs" style="left:0;top:0" width="1920" height="1033"><polygon points="1074.4,961.9 1078.8,967.8 1070.0,967.8" fill="#ebebeb"/><polygon points="1070.0,977.2 1078.8,977.2 1074.4,982.8" fill="#ebebeb"/></svg>
<div style="left:638px;top:957px;width:44px;height:32px;background:#0066ff;border-radius:8px;"></div>
<svg class="abs" style="left:649px;top:962px" width="22" height="22" viewBox="0 0 22 22"><circle cx="10.9" cy="11" r="7.2" fill="none" stroke="#fff" stroke-width="1.6"/><circle cx="10.9" cy="11" r="1.55" fill="#fff"/><path d="M10.9 1.1 V6.8 M10.9 15.2 V20.9 M1 11 H6.7 M15.1 11 H20.8" stroke="#fff" stroke-width="1.8" fill="none"/></svg>
<div style="left:1360px;top:42px;width:6px;height:988px;background:#808080;"></div>
<div style="left:1366px;top:42px;width:532px;height:986px;background:#ebebeb;"></div>
<div style="left:1366px;top:1028px;width:554px;height:1px;background:#dcdcdc;"></div>
<div style="left:1366px;top:1029px;width:554px;height:1px;background:#f6f6f6;"></div>
<div style="left:1898px;top:42px;width:20px;height:986px;background:#fff;"></div>
<div style="left:1918px;top:42px;width:2px;height:986px;background:#ececec;"></div>
<div style="left:1901px;top:140px;width:14px;height:865px;background:#f0f0f0;"></div>
<svg class="abs" style="left:0;top:0" width="1920" height="1033"><polygon points="1907.5,46.5 1912.8,53.4 1902.2,53.4" fill="#e9e9e9"/><polygon points="1902.2,1016.4 1912.8,1016.4 1907.5,1023.4" fill="#e9e9e9"/><polygon points="1908,563.4 1910.6,566 1905.4,566" fill="#cfcfcf"/><circle cx="1908" cy="572" r="1.8" fill="#cfcfcf"/><polygon points="1905.4,578.6 1910.6,578.6 1908,581.2" fill="#cfcfcf"/></svg>
<div style="left:1366px;top:42px;width:532px;height:30px;overflow:hidden;">
<div style="left:9px;top:-20px;width:514px;height:42px;background:#fff;border-radius:10px;"></div>
<div style="left:29px;top:-22px;width:474px;height:34px;background:#ebebeb;border-radius:9px;"></div>
<svg class="abs" style="left:0;top:0" width="532" height="30"><g stroke="#c4c4c4" stroke-width="1" fill="none"><path d="M50.5 0 V2 H56 M58 3 L60 0 M64.5 0 V2.5 M68 0 L73 2.6 M70 2.6 L75 0 M77 2 H90 M94.5 0 V2.5 M98 1 a2 2 0 0 0 4 0 M104 0 V2 M107 0 V2.5 H110 M113.5 0 V2.5"/><path d="M463.4 -1 L464 3 Q464.3 4.3 465.8 4.3 H478.4 Q479.8 4.3 480.2 3 L481.2 -1" stroke="#3a3a3a" stroke-width="1.3"/><path d="M470.2 2 H476.8" stroke="#6a6a6a" stroke-width="1.5"/><path d="M466.6 0 L466 2.6" stroke="#555" stroke-width="0.8"/></g></svg>
</div>
<div style="left:1375px;top:76px;width:514px;height:181px;background:#fff;border-radius:11px;"></div>
<svg class="abs" style="left:1394px;top:87px" width="18" height="18" viewBox="0 0 18 18"><path d="M9 1.4 L15.6 5.1 V12.9 L9 16.6 L2.4 12.9 V5.1 Z M2.6 5.2 L9 8.9 L15.4 5.2 M9 8.9 V16.4" fill="none" stroke="#333" stroke-width="1.25" stroke-linejoin="round"/></svg>
<div class="t" style="left:1422.56px;top:86.48px;font-size:15.5px;color:#1a1a1a;transform:scaleX(1.0356);">Crystal</div>
<div style="left:1395px;top:118px;width:474px;height:1px;background:#ececec;"></div>
<div style="left:1397px;top:134px;width:14px;height:14px;background:#0066ff;border-radius:2.5px;"></div>
<svg class="abs" style="left:1397px;top:134px" width="14" height="14"><path d="M3 6.8 L5.8 9.5 L10.9 3.4" fill="none" stroke="#fff" stroke-width="1.6"/></svg>
<div class="t" style="left:1419.71px;top:131.08px;font-size:15.5px;color:#1a1a1a;transform:scaleX(1.0862);">Marking completed, axis position restored</div>
<div class="t" style="left:1394.54px;top:170.38px;font-size:15.5px;color:#1a1a1a;transform:scaleX(1.0150);">X</div>
<div style="left:1413px;top:163px;width:141px;height:34px;background:#fff;border:1px solid #d2d2d2;border-radius:6px;box-sizing:border-box;"></div>
<div class="t" style="left:1423.45px;top:171.18px;font-size:15.6px;color:#1a1a1a;transform:scaleX(1.0462);">60,00</div>
<svg class="abs" style="left:0;top:0" width="1920" height="1033"><polygon points="1542.5,169.1 1547.1,174.9 1537.9,174.9" fill="#e4e4e4"/><polygon points="1537.9,184.1 1547.1,184.1 1542.5,190.0" fill="#e4e4e4"/></svg>
<div style="left:1562px;top:163px;width:141px;height:34px;background:#fff;border:1px solid #d2d2d2;border-radius:6px;box-sizing:border-box;"></div>
<div class="t" style="left:1572.45px;top:171.18px;font-size:15.6px;color:#1a1a1a;transform:scaleX(1.0462);">60,00</div>
<svg class="abs" style="left:0;top:0" width="1920" height="1033"><polygon points="1691.5,169.1 1696.1,174.9 1686.9,174.9" fill="#e4e4e4"/><polygon points="1686.9,184.1 1696.1,184.1 1691.5,190.0" fill="#e4e4e4"/></svg>
<div class="t" style="left:1710.49px;top:170.38px;font-size:15.5px;color:#1a1a1a;transform:scaleX(1.0150);">Z</div>
<div style="left:1728px;top:163px;width:141px;height:34px;background:#fff;border:1px solid #d2d2d2;border-radius:6px;box-sizing:border-box;"></div>
<div class="t" style="left:1738.45px;top:171.18px;font-size:15.6px;color:#1a1a1a;transform:scaleX(1.0462);">60,00</div>
<svg class="abs" style="left:0;top:0" width="1920" height="1033"><polygon points="1857.5,169.1 1862.1,174.9 1852.9,174.9" fill="#e4e4e4"/><polygon points="1852.9,184.1 1862.1,184.1 1857.5,190.0" fill="#e4e4e4"/></svg>
<div style="left:1395px;top:209px;width:474px;height:38px;background:#ebebeb;border-radius:9px;"></div>
<div class="t" style="left:1403.47px;top:218.08px;font-size:15.5px;color:#1a1a1a;transform:scaleX(1.0349);">Hide Crystal Display</div>
<div style="left:1837px;top:221px;width:14px;height:14px;background:#fff;border:1px solid #cfcfcf;border-radius:2.5px;box-sizing:border-box;"></div>
<div style="left:1375px;top:269px;width:514px;height:191px;background:#fff;border-radius:11px;"></div>
<svg class="abs" style="left:1394px;top:280px" width="18" height="18" viewBox="0 0 18 18"><path d="M9 1.3 L15.6 5 V13 L9 16.7 L2.4 13 V5 Z" fill="none" stroke="#444" stroke-width="1.15" stroke-linejoin="round"/><path d="M5.9 10.7 V7.2 L8.95 10.2 L12 7.2 V10.7" fill="none" stroke="#333" stroke-width="1.25" stroke-linejoin="round" stroke-linecap="round"/></svg>
<div class="t" style="left:1422.33px;top:279.58px;font-size:15.5px;color:#1a1a1a;transform:scaleX(1.0694);">Model Size</div>
<div style="left:1395px;top:311px;width:474px;height:1px;background:#ececec;"></div>
<div class="t" style="left:1394.54px;top:331.38px;font-size:15.5px;color:#1a1a1a;transform:scaleX(1.0150);">X</div>
<div style="left:1413px;top:324px;width:135px;height:34px;background:#fff;border:1px solid #d2d2d2;border-radius:6px;box-sizing:border-box;"></div>
<div class="t" style="left:1423.43px;top:332.18px;font-size:15.6px;color:#1a1a1a;transform:scaleX(1.0702);">29,10</div>
<svg class="abs" style="left:0;top:0" width="1920" height="1033"><polygon points="1536.5,330.1 1541.1,335.9 1531.9,335.9" fill="#e4e4e4"/><polygon points="1531.9,345.1 1541.1,345.1 1536.5,351.0" fill="#e4e4e4"/></svg>
<div class="t" style="left:1554.97px;top:331.38px;font-size:15.5px;color:#1a1a1a;transform:scaleX(1.0150);">Y</div>
<div style="left:1573px;top:324px;width:135px;height:34px;background:#fff;border:1px solid #d2d2d2;border-radius:6px;box-sizing:border-box;"></div>
<div class="t" style="left:1583.44px;top:332.18px;font-size:15.6px;color:#1a1a1a;transform:scaleX(1.0592);">30,26</div>
<svg class="abs" style="left:0;top:0" width="1920" height="1033"><polygon points="1696.5,330.1 1701.1,335.9 1691.9,335.9" fill="#e4e4e4"/><polygon points="1691.9,345.1 1701.1,345.1 1696.5,351.0" fill="#e4e4e4"/></svg>
<div class="t" style="left:1716.59px;top:331.38px;font-size:15.5px;color:#1a1a1a;transform:scaleX(1.0150);">Z</div>
<div style="left:1734px;top:324px;width:135px;height:34px;background:#fff;border:1px solid #d2d2d2;border-radius:6px;box-sizing:border-box;"></div>
<div class="t" style="left:1744.37px;top:332.18px;font-size:15.6px;color:#1a1a1a;transform:scaleX(1.0100);">14,41</div>
<svg class="abs" style="left:0;top:0" width="1920" height="1033"><polygon points="1857.5,330.1 1862.1,335.9 1852.9,335.9" fill="#e4e4e4"/><polygon points="1852.9,345.1 1862.1,345.1 1857.5,351.0" fill="#e4e4e4"/></svg>
<div class="t" style="left:1394.53px;top:377.38px;font-size:15.5px;color:#1a1a1a;transform:scaleX(1.0637);">Number of layers</div>
<div style="left:1532px;top:370px;width:104px;height:34px;background:#fff;border:1px solid #d2d2d2;border-radius:6px;box-sizing:border-box;"></div>
<div class="t" style="left:1542.33px;top:378.18px;font-size:15.6px;color:#1a1a1a;transform:scaleX(1.0439);">1,00</div>
<svg class="abs" style="left:0;top:0" width="1920" height="1033"><polygon points="1624.5,376.1 1629.1,381.9 1619.9,381.9" fill="#e4e4e4"/><polygon points="1619.9,391.1 1629.1,391.1 1624.5,397.0" fill="#e4e4e4"/></svg>
<div class="t" style="left:1394.24px;top:423.48px;font-size:15.5px;color:#1a1a1a;transform:scaleX(0.9949);">Scale</div>
<div style="left:1441px;top:431px;width:301.70000000000005px;height:4px;background:#c8c7cd;"></div>
<div style="left:1441px;top:431px;width:237.5px;height:4px;background:#0066ff;"></div>
<svg class="abs" style="left:0;top:0" width="1920" height="1033"><circle cx="1678.5" cy="433.4" r="7.9" fill="#fff" stroke="#0066ff" stroke-width="2.3"/></svg>
<div style="left:1751px;top:416px;width:118px;height:34px;background:#fff;border:1px solid #d2d2d2;border-radius:6px;box-sizing:border-box;"></div>
<div class="t" style="left:1761.45px;top:424.18px;font-size:15.6px;color:#1a1a1a;transform:scaleX(1.0462);">52,00</div>
<svg class="abs" style="left:0;top:0" width="1920" height="1033"><polygon points="1857.5,422.1 1862.1,427.9 1852.9,427.9" fill="#e4e4e4"/><polygon points="1852.9,437.1 1862.1,437.1 1857.5,443.0" fill="#e4e4e4"/></svg>
<div style="left:1375px;top:472px;width:514px;height:503px;background:#fff;border-radius:11px;"></div>
<div style="left:1375px;top:472px;width:514px;height:40px;background:#0066ff;border-radius:11px 11px 0 0;"></div>
<div class="t" style="left:1394.55px;top:481.88px;font-size:15.5px;color:#fff;transform:scaleX(1.0488);">Laser Setting</div>
<svg class="abs" style="left:0;top:0" width="1920" height="600"><path d="M1856.37 492.05 L1856.37 492.21 L1856.36 492.37 L1856.35 492.53 L1856.33 492.68 L1856.31 492.84 L1856.28 493.00 L1856.24 493.15 L1856.19 493.30 L1856.12 493.45 L1856.03 493.59 L1855.90 493.73 L1855.73 493.85 L1855.52 493.96 L1855.26 494.05 L1854.97 494.12 L1854.68 494.19 L1854.42 494.25 L1854.20 494.32 L1854.03 494.40 L1853.89 494.48 L1853.78 494.57 L1853.69 494.67 L1853.61 494.77 L1853.55 494.88 L1853.48 494.98 L1853.42 495.09 L1853.36 495.19 L1853.30 495.30 L1853.24 495.40 L1853.17 495.51 L1853.11 495.61 L1853.05 495.72 L1852.99 495.82 L1852.92 495.92 L1852.86 496.03 L1852.80 496.14 L1852.74 496.25 L1852.69 496.36 L1852.64 496.48 L1852.62 496.62 L1852.61 496.78 L1852.63 496.96 L1852.67 497.18 L1852.75 497.43 L1852.83 497.71 L1852.91 497.99 L1852.96 498.25 L1852.97 498.49 L1852.95 498.69 L1852.89 498.86 L1852.81 499.01 L1852.72 499.15 L1852.61 499.27 L1852.49 499.38 L1852.36 499.48 L1852.23 499.57 L1852.10 499.67 L1851.96 499.76 L1851.83 499.84 L1851.68 499.92 L1851.54 500.00 L1851.40 500.07 L1851.25 500.14 L1851.10 500.21 L1850.95 500.27 L1850.80 500.32 L1850.64 500.37 L1850.48 500.40 L1850.31 500.41 L1850.14 500.41 L1849.95 500.37 L1849.76 500.29 L1849.56 500.16 L1849.35 499.98 L1849.14 499.78 L1848.93 499.57 L1848.75 499.38 L1848.57 499.23 L1848.42 499.13 L1848.27 499.05 L1848.14 499.01 L1848.00 498.98 L1847.88 498.97 L1847.75 498.96 L1847.62 498.96 L1847.50 498.96 L1847.37 498.96 L1847.25 498.96 L1847.12 498.97 L1847.00 498.97 L1846.88 498.97 L1846.75 498.96 L1846.63 498.96 L1846.50 498.96 L1846.38 498.96 L1846.25 498.96 L1846.12 498.97 L1846.00 498.98 L1845.86 499.01 L1845.73 499.05 L1845.58 499.13 L1845.43 499.23 L1845.25 499.38 L1845.07 499.57 L1844.86 499.78 L1844.65 499.98 L1844.44 500.16 L1844.24 500.29 L1844.05 500.37 L1843.86 500.41 L1843.69 500.41 L1843.52 500.40 L1843.36 500.37 L1843.20 500.32 L1843.05 500.27 L1842.90 500.21 L1842.75 500.14 L1842.60 500.07 L1842.46 500.00 L1842.32 499.92 L1842.17 499.84 L1842.04 499.76 L1841.90 499.67 L1841.77 499.57 L1841.64 499.48 L1841.51 499.38 L1841.39 499.27 L1841.28 499.15 L1841.19 499.01 L1841.11 498.86 L1841.05 498.69 L1841.03 498.49 L1841.04 498.25 L1841.09 497.99 L1841.17 497.71 L1841.25 497.43 L1841.33 497.18 L1841.37 496.96 L1841.39 496.78 L1841.38 496.62 L1841.36 496.48 L1841.31 496.36 L1841.26 496.25 L1841.20 496.14 L1841.14 496.03 L1841.08 495.92 L1841.01 495.82 L1840.95 495.72 L1840.89 495.61 L1840.83 495.51 L1840.76 495.40 L1840.70 495.30 L1840.64 495.19 L1840.58 495.09 L1840.52 494.98 L1840.45 494.88 L1840.39 494.77 L1840.31 494.67 L1840.22 494.57 L1840.11 494.48 L1839.97 494.40 L1839.80 494.32 L1839.58 494.25 L1839.32 494.19 L1839.03 494.12 L1838.74 494.05 L1838.48 493.96 L1838.27 493.85 L1838.10 493.73 L1837.97 493.59 L1837.88 493.45 L1837.81 493.30 L1837.76 493.15 L1837.72 493.00 L1837.69 492.84 L1837.67 492.68 L1837.65 492.53 L1837.64 492.37 L1837.63 492.21 L1837.63 492.05 L1837.63 491.89 L1837.64 491.73 L1837.65 491.57 L1837.67 491.42 L1837.69 491.26 L1837.72 491.10 L1837.76 490.95 L1837.81 490.80 L1837.88 490.65 L1837.97 490.51 L1838.10 490.37 L1838.27 490.25 L1838.48 490.14 L1838.74 490.05 L1839.03 489.98 L1839.32 489.91 L1839.58 489.85 L1839.80 489.78 L1839.97 489.70 L1840.11 489.62 L1840.22 489.53 L1840.31 489.43 L1840.39 489.33 L1840.45 489.22 L1840.52 489.12 L1840.58 489.01 L1840.64 488.91 L1840.70 488.80 L1840.76 488.70 L1840.83 488.59 L1840.89 488.49 L1840.95 488.38 L1841.01 488.28 L1841.08 488.18 L1841.14 488.07 L1841.20 487.96 L1841.26 487.85 L1841.31 487.74 L1841.36 487.62 L1841.38 487.48 L1841.39 487.32 L1841.37 487.14 L1841.33 486.92 L1841.25 486.67 L1841.17 486.39 L1841.09 486.11 L1841.04 485.85 L1841.03 485.61 L1841.05 485.41 L1841.11 485.24 L1841.19 485.09 L1841.28 484.95 L1841.39 484.83 L1841.51 484.72 L1841.64 484.62 L1841.77 484.53 L1841.90 484.43 L1842.04 484.34 L1842.17 484.26 L1842.32 484.18 L1842.46 484.10 L1842.60 484.03 L1842.75 483.96 L1842.90 483.89 L1843.05 483.83 L1843.20 483.78 L1843.36 483.73 L1843.52 483.70 L1843.69 483.69 L1843.86 483.69 L1844.05 483.73 L1844.24 483.81 L1844.44 483.94 L1844.65 484.12 L1844.86 484.32 L1845.07 484.53 L1845.25 484.72 L1845.43 484.87 L1845.58 484.97 L1845.73 485.05 L1845.86 485.09 L1846.00 485.12 L1846.12 485.13 L1846.25 485.14 L1846.38 485.14 L1846.50 485.14 L1846.63 485.14 L1846.75 485.14 L1846.88 485.13 L1847.00 485.13 L1847.12 485.13 L1847.25 485.14 L1847.37 485.14 L1847.50 485.14 L1847.62 485.14 L1847.75 485.14 L1847.88 485.13 L1848.00 485.12 L1848.14 485.09 L1848.27 485.05 L1848.42 484.97 L1848.57 484.87 L1848.75 484.72 L1848.93 484.53 L1849.14 484.32 L1849.35 484.12 L1849.56 483.94 L1849.76 483.81 L1849.95 483.73 L1850.14 483.69 L1850.31 483.69 L1850.48 483.70 L1850.64 483.73 L1850.80 483.78 L1850.95 483.83 L1851.10 483.89 L1851.25 483.96 L1851.40 484.03 L1851.54 484.10 L1851.68 484.18 L1851.83 484.26 L1851.96 484.34 L1852.10 484.43 L1852.23 484.53 L1852.36 484.62 L1852.49 484.72 L1852.61 484.83 L1852.72 484.95 L1852.81 485.09 L1852.89 485.24 L1852.95 485.41 L1852.97 485.61 L1852.96 485.85 L1852.91 486.11 L1852.83 486.39 L1852.75 486.67 L1852.67 486.92 L1852.63 487.14 L1852.61 487.32 L1852.62 487.48 L1852.64 487.62 L1852.69 487.74 L1852.74 487.85 L1852.80 487.96 L1852.86 488.07 L1852.92 488.18 L1852.99 488.28 L1853.05 488.38 L1853.11 488.49 L1853.17 488.59 L1853.24 488.70 L1853.30 488.80 L1853.36 488.91 L1853.42 489.01 L1853.48 489.12 L1853.55 489.22 L1853.61 489.33 L1853.69 489.43 L1853.78 489.53 L1853.89 489.62 L1854.03 489.70 L1854.20 489.78 L1854.42 489.85 L1854.68 489.91 L1854.97 489.98 L1855.26 490.05 L1855.52 490.14 L1855.73 490.25 L1855.90 490.37 L1856.03 490.51 L1856.12 490.65 L1856.19 490.80 L1856.24 490.95 L1856.28 491.10 L1856.31 491.26 L1856.33 491.42 L1856.35 491.57 L1856.36 491.73 L1856.37 491.89 Z M1850.95 492.05 A3.95 3.95 0 1 0 1843.05 492.05 A3.95 3.95 0 1 0 1850.95 492.05 Z" fill="#fff" fill-rule="evenodd" stroke="#fff" stroke-width="0.5" stroke-linejoin="round"/></svg>
<div class="t" style="left:1394.75px;top:531.38px;font-size:15.5px;color:#1a1a1a;transform:scaleX(1.0095);">XY Spacing</div>
<div style="left:1751px;top:524px;width:118px;height:34px;background:#fff;border:1px solid #d2d2d2;border-radius:6px;box-sizing:border-box;"></div>
<div class="t" style="left:1761.89px;top:532.18px;font-size:15.6px;color:#1a1a1a;transform:scaleX(1.0407);">0.06</div>
<div class="t" style="left:1838.16px;top:532.34px;font-size:12.3px;color:#b4b4b4;transform:scaleX(1.1357);">mm</div>
<div class="t" style="left:1394.74px;top:577.78px;font-size:15.5px;color:#1a1a1a;transform:scaleX(1.0196);">XY Max Spacing</div>
<div style="left:1751px;top:570px;width:118px;height:34px;background:#fff;border:1px solid #d2d2d2;border-radius:6px;box-sizing:border-box;"></div>
<div class="t" style="left:1761.88px;top:578.18px;font-size:15.6px;color:#a0a0a0;transform:scaleX(1.0560);">0.250</div>
<div class="t" style="left:1838.16px;top:578.34px;font-size:12.3px;color:#b4b4b4;transform:scaleX(1.1357);">mm</div>
<div class="t" style="left:1394.99px;top:623.98px;font-size:15.5px;color:#1a1a1a;transform:scaleX(1.0191);">Z Spacing</div>
<div style="left:1751px;top:616px;width:118px;height:34px;background:#fff;border:1px solid #d2d2d2;border-radius:6px;box-sizing:border-box;"></div>
<div class="t" style="left:1761.89px;top:624.18px;font-size:15.6px;color:#1a1a1a;transform:scaleX(1.0407);">0.06</div>
<div class="t" style="left:1838.16px;top:624.34px;font-size:12.3px;color:#b4b4b4;transform:scaleX(1.1357);">mm</div>
<div style="left:1395px;top:662px;width:474px;height:1px;background:#ececec;"></div>
<div class="t" style="left:1395.01px;top:682.78px;font-size:15.5px;color:#1a1a1a;transform:scaleX(1.0636);">Axis Depth</div>
<div style="left:1751px;top:675px;width:118px;height:34px;background:#fff;border:1px solid #d2d2d2;border-radius:6px;box-sizing:border-box;"></div>
<div class="t" style="left:1761.30px;top:683.18px;font-size:15.6px;color:#1a1a1a;transform:scaleX(1.0709);">10,00</div>
<svg class="abs" style="left:0;top:0" width="1920" height="1033"><polygon points="1857.5,681.1 1862.1,686.9 1852.9,686.9" fill="#e4e4e4"/><polygon points="1852.9,696.1 1862.1,696.1 1857.5,702.0" fill="#e4e4e4"/></svg>
<div class="t" style="left:1394.52px;top:728.58px;font-size:15.5px;color:#1a1a1a;transform:scaleX(1.0764);">Calibration Depth</div>
<div style="left:1751px;top:721px;width:118px;height:34px;background:#fff;border:1px solid #d2d2d2;border-radius:6px;box-sizing:border-box;"></div>
<div class="t" style="left:1761.30px;top:729.18px;font-size:15.6px;color:#1a1a1a;transform:scaleX(1.0709);">15,00</div>
<svg class="abs" style="left:0;top:0" width="1920" height="1033"><polygon points="1857.5,727.1 1862.1,732.9 1852.9,732.9" fill="#e4e4e4"/><polygon points="1852.9,742.1 1862.1,742.1 1857.5,748.0" fill="#e4e4e4"/></svg>
<div style="left:1395px;top:767px;width:474px;height:1px;background:#ececec;"></div>
<div class="t" style="left:1394.34px;top:787.48px;font-size:15.5px;color:#1a1a1a;transform:scaleX(1.0598);">Dwell Time</div>
<div style="left:1489px;top:795px;width:253.70000000000005px;height:4px;background:#c8c7cd;"></div>
<div style="left:1489px;top:795px;width:57.40000000000009px;height:4px;background:#0066ff;"></div>
<svg class="abs" style="left:0;top:0" width="1920" height="1033"><circle cx="1546.4" cy="797.3" r="7.9" fill="#fff" stroke="#0066ff" stroke-width="2.3"/></svg>
<div style="left:1751px;top:780px;width:118px;height:34px;background:#fff;border:1px solid #d2d2d2;border-radius:6px;box-sizing:border-box;"></div>
<div class="t" style="left:1762.19px;top:788.18px;font-size:15.6px;color:#1a1a1a;transform:scaleX(1.0683);">400</div>
<div class="t" style="left:1847.26px;top:788.34px;font-size:12.3px;color:#b4b4b4;transform:scaleX(1.0955);">us</div>
<div class="t" style="left:1394.36px;top:833.58px;font-size:15.5px;color:#1a1a1a;transform:scaleX(1.0444);">Frequency</div>
<div style="left:1489px;top:841px;width:253.70000000000005px;height:4px;background:#c8c7cd;"></div>
<div style="left:1489px;top:841px;width:56.299999999999955px;height:4px;background:#0066ff;"></div>
<svg class="abs" style="left:0;top:0" width="1920" height="1033"><circle cx="1545.3" cy="843.3" r="7.9" fill="#fff" stroke="#0066ff" stroke-width="2.3"/></svg>
<div style="left:1751px;top:826px;width:118px;height:34px;background:#fff;border:1px solid #d2d2d2;border-radius:6px;box-sizing:border-box;"></div>
<div class="t" style="left:1762.19px;top:834.18px;font-size:15.6px;color:#1a1a1a;transform:scaleX(1.0681);">40</div>
<div class="t" style="left:1837.77px;top:834.34px;font-size:12.3px;color:#b4b4b4;transform:scaleX(1.0306);">KHz</div>
<div class="t" style="left:1394.35px;top:879.48px;font-size:15.5px;color:#1a1a1a;transform:scaleX(1.0507);">Pulse Width</div>
<div style="left:1489px;top:887px;width:253.70000000000005px;height:4px;background:#c8c7cd;"></div>
<div style="left:1489px;top:887px;width:26.299999999999955px;height:4px;background:#0066ff;"></div>
<svg class="abs" style="left:0;top:0" width="1920" height="1033"><circle cx="1515.3" cy="889.2" r="7.9" fill="#fff" stroke="#0066ff" stroke-width="2.3"/></svg>
<div style="left:1751px;top:872px;width:118px;height:34px;background:#fff;border:1px solid #d2d2d2;border-radius:6px;box-sizing:border-box;"></div>
<div class="t" style="left:1761.34px;top:880.18px;font-size:15.6px;color:#1a1a1a;transform:scaleX(1.0378);">15</div>
<div class="t" style="left:1847.26px;top:880.34px;font-size:12.3px;color:#b4b4b4;transform:scaleX(1.0955);">us</div>
<div style="left:1395px;top:918px;width:474px;height:1px;background:#ececec;"></div>
<div class="t" style="left:1395.31px;top:938.38px;font-size:15.5px;color:#1a1a1a;transform:scaleX(1.0347);">Adjust Z-axis</div>
<div style="left:1632px;top:931px;width:118px;height:34px;background:#fff;border:1px solid #d2d2d2;border-radius:6px;box-sizing:border-box;"></div>
<div class="t" style="left:1642.46px;top:939.18px;font-size:15.6px;color:#1a1a1a;transform:scaleX(1.0395);">5.00</div>
<div style="left:1754px;top:932px;width:45px;height:32px;background:#e0e0e0;border-radius:7px;"></div>
<div class="t" style="left:1765.26px;top:938.18px;font-size:15.5px;color:#1a1a1a;transform:scaleX(1.0819);">Up</div>
<div style="left:1803px;top:932px;width:66px;height:32px;background:#e0e0e0;border-radius:7px;"></div>
<div class="t" style="left:1814.31px;top:938.18px;font-size:15.5px;color:#1a1a1a;transform:scaleX(1.0875);">Down</div>
<div style="left:1375px;top:987px;width:167px;height:32px;background:#e0e0e0;border-radius:7px;"></div>
<div style="left:1549px;top:987px;width:166px;height:32px;background:#0066ff;border-radius:7px;"></div>
<div style="left:1722px;top:987px;width:167px;height:32px;background:#e0e0e0;border-radius:7px;"></div>
<div class="t" style="left:1429.25px;top:994.18px;font-size:15.5px;color:#1a1a1a;transform:scaleX(1.0481);">Preview</div>
<div class="t" style="left:1613.54px;top:994.18px;font-size:15.5px;color:#fff;transform:scaleX(1.0873);">Start</div>
<div class="t" style="left:1783.60px;top:994.18px;font-size:15.5px;color:#1a1a1a;transform:scaleX(1.0040);">Focus</div>
<div style="left:0px;top:1030px;width:1920px;height:3px;background:#d3e5ed;"></div>
<div style="left:560px;top:1030px;width:61px;height:3px;background:#e9f2f6;"></div>
<div style="left:1366px;top:1030px;width:554px;height:3px;background:#d4dcea;"></div>
<svg class="abs" style="left:0;top:0" width="1920" height="1033"><polygon points="1173,942 1311.5,941 1311.9,928.4 1361.8,949.5 1310.2,968.8 1310.2,956.3 1173,944.2" fill="#fa5252"/><ellipse cx="1620.4" cy="949.2" rx="257.4" ry="35.9" fill="none" stroke="#f54a4a" stroke-width="3.8"/></svg>
</body></html>
